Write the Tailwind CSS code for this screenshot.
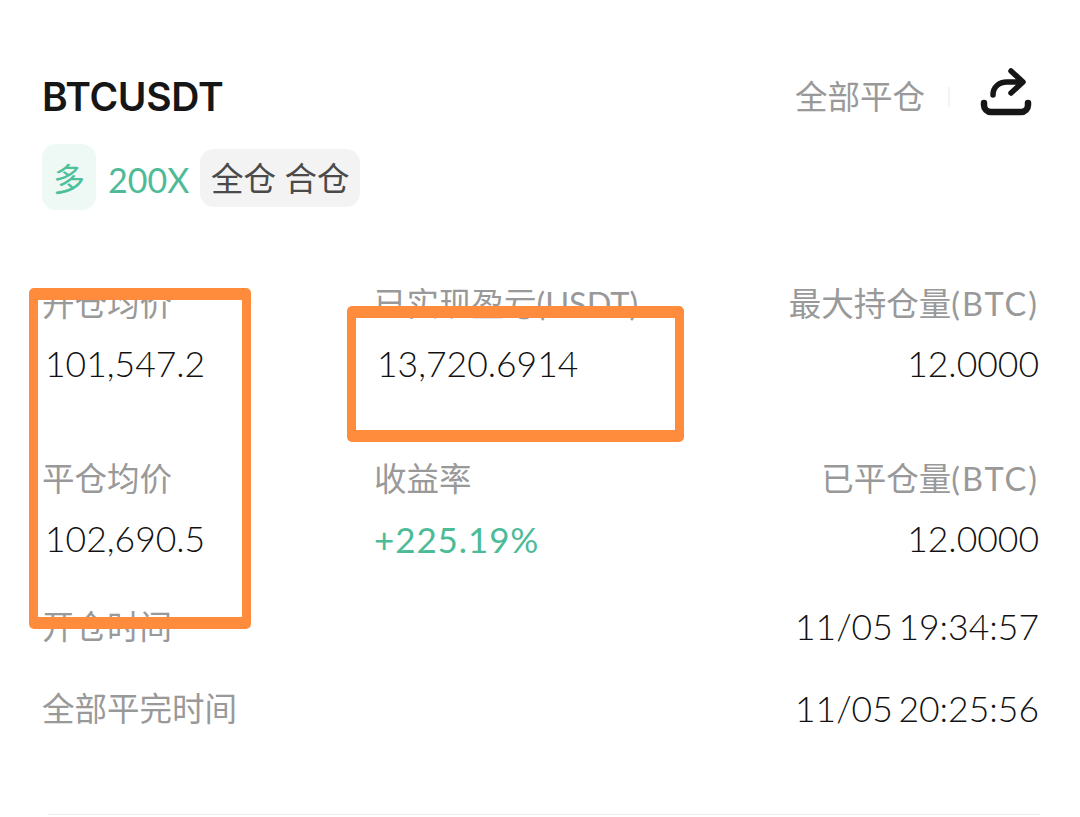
<!DOCTYPE html>
<html lang="zh-CN">
<head>
    <meta charset="UTF-8">
    <title>BTCUSDT</title>
    <script src="https://cdn.jsdelivr.net/npm/@tailwindcss/browser@4"></script>
</head>
<body class="bg-white font-['Lato','Noto_Sans_CJK_SC',sans-serif] overflow-hidden">
    <div class="relative w-[1080px] h-[817px] overflow-hidden">
        <!-- 标题 -->
        <header class="flex items-center justify-between pl-[42px] pr-[48px] pt-[51px] h-[143px]">
            <h1 class="font-['Inter','Noto_Sans_CJK_SC',sans-serif] text-[39px] leading-[48px] font-semibold tracking-[-0.3px] text-[#161616]">BTCUSDT</h1>
            <div class="flex items-center">
                <span class="text-[32.5px] leading-[48px] text-[#999999]">全部平仓</span>
                <span class="w-[2px] h-[20px] bg-[#f3f3f3] ml-[23px] mr-[30px]"></span>
                <svg class="w-[52px] h-[64px]" viewBox="0 0 52 64" fill="none" stroke="#161616" stroke-linecap="round" stroke-linejoin="round">
                    <path stroke-width="6.5" d="M4 38v2a7 7 0 0 0 7 7h30a7 7 0 0 0 7-7v-2"/>
                    <path stroke-width="5.5" d="M13 30c0-8 6-13 14-13h15"/>
                    <path stroke-width="5.5" d="M31 6l12 11-12 11"/>
                </svg>
            </div>
        </header>

        <!-- 标签 -->
        <div class="flex items-center gap-[12px] pl-[42px] mt-[1px]">
            <span class="flex items-center justify-center w-[54px] h-[66px] pt-[4px] rounded-[14px] bg-[#eef9f5] text-[32px] text-[#4cc09a]">多</span>
            <span class="pt-[6px] text-[34px] leading-none text-[#4dbb97]">200X</span>
            <span class="flex items-center justify-center w-[160px] h-[58px] mt-[2px] -ml-[1px] pt-[3px] rounded-[14px] bg-[#f3f3f3] text-[32.5px] text-[#4a4a4a]">全仓 合仓</span>
        </div>

        <!-- 数据 -->
        <div class="grid grid-cols-[332px_1fr_auto] pl-[42px] pr-[41px] mt-[72px] text-[32.5px] leading-[44px] text-[#999999]">
            <div class="h-[60px]">开仓均价</div>
            <div>已实现盈亏(USDT)</div>
            <div class="text-right">最大持仓量<span class="tracking-[2px]">(BTC)</span></div>

            <div class="h-[115px] pl-[3px] text-[35.5px] font-light text-[#111111]">101,547.2</div>
            <div class="pl-[3px] text-[35.5px] font-light text-[#111111]">13,720.6914</div>
            <div class="text-right text-[35.5px] font-light text-[#111111]">12.0000</div>

            <div class="h-[60px]">平仓均价</div>
            <div>收益率</div>
            <div class="text-right">已平仓量<span class="tracking-[2px]">(BTC)</span></div>

            <div class="h-[88px] pl-[3px] text-[35.5px] font-light text-[#111111]">102,690.5</div>
            <div class="text-[35px] tracking-[0.9px] text-[#4dbb97]">+225.19%</div>
            <div class="text-right text-[35.5px] font-light text-[#111111]">12.0000</div>

            <div class="h-[82px]">开仓时间</div>
            <div></div>
            <div class="text-right text-[35.5px] font-light [word-spacing:-4px] text-[#111111]">11/05 19:34:57</div>

            <div>全部平完时间</div>
            <div></div>
            <div class="text-right text-[35.5px] font-light [word-spacing:-4px] text-[#111111]">11/05 20:25:56</div>
        </div>

        <div class="absolute left-[48px] right-[40px] top-[814px] h-[1px] bg-[#ececec]"></div>

        <!-- 橙色标注框 -->
        <div class="absolute left-[29px] top-[288px] w-[222px] h-[341px] rounded-[5px] border-[#ff8c3c] border-t-[12px] border-x-[9px] border-b-[12px]"></div>
        <div class="absolute left-[347px] top-[306px] w-[337px] h-[136px] rounded-[5px] border-[#ff8c3c] border-t-[12px] border-x-[9px] border-b-[12px]"></div>
    </div>
</body>
</html>
